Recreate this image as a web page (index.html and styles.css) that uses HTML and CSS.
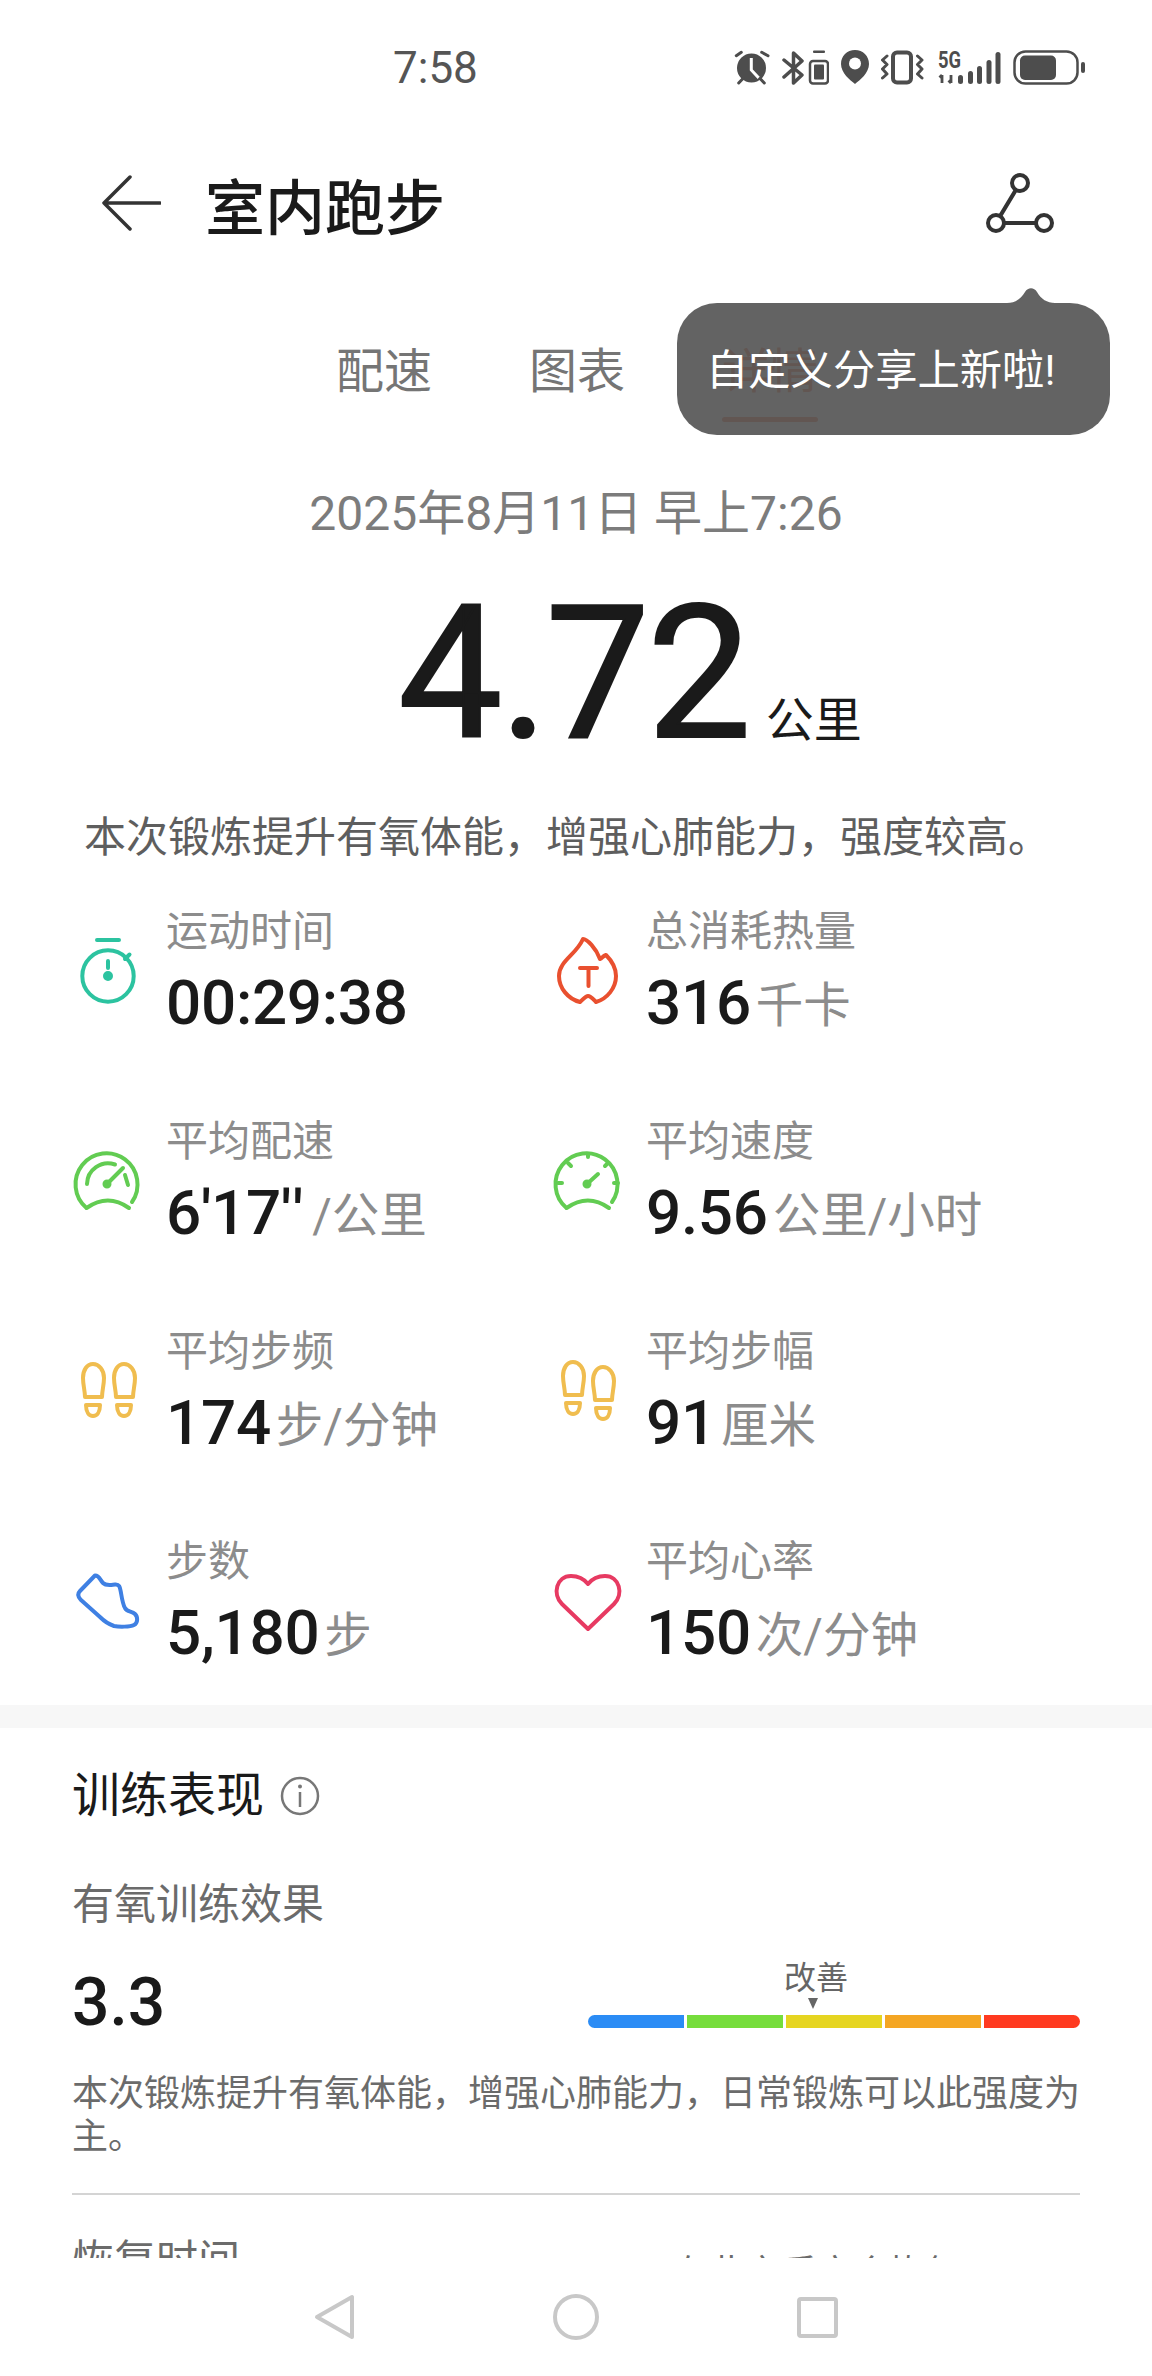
FILE: index.html
```html
<!DOCTYPE html>
<html lang="zh-CN">

<head>
  <meta charset="UTF-8" />
  <meta name="viewport" content="width=device-width, initial-scale=1.0" />
  <title>室内跑步</title>
  <link rel="stylesheet" href="styles.css">
</head>

<body>
  <div class="page">
    <main class="content">
      <div class="statusbar">
        <span class="clock">7:58</span>
        <div class="status-icons">
          <svg width="36" height="36" viewBox="0 0 36 36">
            <circle cx="17.5" cy="18" r="14.5" fill="#4d4d4d" />
            <path d="M17.3 8v12l7.5 8" fill="none" stroke="#fff" stroke-width="3" />
            <path d="M2.3 5.7 7.3 2.3M27.7 2.3l6.3 3.4M4.7 33 9 28.5M26 28.5l4.300 4.500" fill="none" stroke="#4d4d4d" stroke-width="3" stroke-linecap="round" />
          </svg>
          <svg width="47" height="36" viewBox="0 0 47 36">
            <path d="M2 10 20 25l-8.500 8V3L20 11 2 27" fill="none" stroke="#4d4d4d" stroke-width="3.500" stroke-linejoin="round" stroke-linecap="round" />
            <rect x="28" y="11" width="18" height="22.500" rx="3" fill="none" stroke="#4d4d4d" stroke-width="2.500" />
            <rect x="32" y="14.500" width="10" height="15" rx="1" fill="#4d4d4d" />
            <rect x="31" y="0.500" width="12" height="2.500" rx="1" fill="#4d4d4d" />
          </svg>
          <svg width="28" height="36" viewBox="0 0 28 36">
            <path d="M14 0C6 0 0 6 0 14c0 9 9 16 14 20 5-4 14-11 14-20C28 6 22 0 14 0Z" fill="#4d4d4d" />
            <circle cx="14" cy="13.500" r="6" fill="#fff" />
          </svg>
          <svg width="45" height="36" viewBox="0 0 45 36">
            <rect x="12" y="2.500" width="18" height="30" rx="4" fill="none" stroke="#4d4d4d" stroke-width="4" />
            <path d="M6 6 1.500 10 6 14.500 1.500 19 6 24l-4.500 4M36.500 6l4.500 4-4.500 4.500L41 19l-4.500 5 4.500 4" fill="none" stroke="#4d4d4d" stroke-width="3" stroke-linejoin="round" stroke-linecap="round" />
          </svg>
          <svg width="63" height="36" viewBox="0 0 63 36">
            <text class="net-label" x="0" y="18" textLength="23" lengthAdjust="spacingAndGlyphs">5G</text>
            <path d="M4 33v-8M1.500 27.500 4 25M13 25v8M10.500 30.500 13 33" fill="none" stroke="#4d4d4d" stroke-width="2.800" />
            <rect x="20" y="25" width="5" height="9" rx="2.500" fill="#4d4d4d" />
            <rect x="30" y="21" width="5" height="13" rx="2.500" fill="#4d4d4d" />
            <rect x="39" y="16" width="5" height="18" rx="2.500" fill="#4d4d4d" />
            <rect x="48.500" y="10" width="5" height="24" rx="2.500" fill="#4d4d4d" />
            <rect x="57.500" y="2" width="5" height="32" rx="2.500" fill="#4d4d4d" />
          </svg>
          <svg width="72" height="36" viewBox="0 0 72 36">
            <rect x="1.500" y="1.500" width="63" height="32" rx="11" fill="none" stroke="#4d4d4d" stroke-width="2.500" />
            <rect x="7" y="5.500" width="36" height="24.500" rx="5" fill="#4d4d4d" />
            <rect x="68" y="12" width="4" height="11" rx="2" fill="#4d4d4d" />
          </svg>
        </div>
      </div>

      <header class="app-header">
        <div class="header-left">
          <svg width="60" height="56" viewBox="0 0 60 56">
            <path d="M29 2 3 28l26 26M3 28h56" fill="none" stroke="#333" stroke-width="3.500" stroke-linecap="round" stroke-linejoin="round" />
          </svg>
          <h1>室内跑步</h1>
        </div>
        <svg width="70" height="66" viewBox="0 0 70 66">
          <g fill="none" stroke="#333" stroke-width="4">
            <circle cx="35" cy="13" r="8" />
            <circle cx="11" cy="53" r="8" />
            <circle cx="59" cy="53" r="8" />
            <path d="M30.900 19.900 15.100 46.100M19 53h32" />
          </g>
        </svg>
      </header>

      <nav class="tabs">
        <div class="tab">配速</div>
        <div class="tab">图表</div>
        <div class="tab tab-active">详情<div class="tab-line"></div></div>
      </nav>

      <div class="date">2025年8月11日 早上7:26</div>

      <div class="distance">
        <span class="distance-value">4.72</span>
        <span class="distance-unit">公里</span>
      </div>

      <p class="summary">本次锻炼提升有氧体能，增强心肺能力，强度较高。</p>

      <section class="stats">
        <div class="stat">
          <svg width="72" height="72" viewBox="0 0 72 72" fill="none" stroke="#2cc3a0" stroke-width="4" stroke-linecap="round">
            <path d="M25 7h22M53 26l4.500-4.500M36 28v7" />
            <circle cx="36" cy="43" r="25.700" />
            <circle cx="36" cy="43" r="3" fill="#2cc3a0" />
          </svg>
          <div>
            <div class="stat-label">运动时间</div>
            <div class="stat-value">00:29:38</div>
          </div>
        </div>
        <div class="stat">
          <svg width="72" height="72" viewBox="0 0 72 72" fill="none" stroke="#e9502f" stroke-width="4" stroke-linecap="round" stroke-linejoin="round">
            <path d="M31 6c4 0 13 9 17 20 2-1 3-3 6-4 6 6 10 13 10 21 0 12-9 23-20 26-3-3-5-6-8-6s-5 4-8 6C16 66 7 55 7 43 7 28 24 22 31 6Z" />
            <path d="M28 35h17M36.500 35v18" />
          </svg>
          <div>
            <div class="stat-label">总消耗热量</div>
            <div class="stat-value">316<span class="stat-unit">千卡</span></div>
          </div>
        </div>

        <div class="stat">
          <svg width="72" height="72" viewBox="0 0 72 72" fill="none" stroke="#62cc52" stroke-width="4" stroke-linecap="round">
            <path d="M14.500 65A31 31 0 1 1 60 59M14.500 65Q36 50 57 65" />
            <path d="M15 41A21 21 0 0 1 43 21.500M53 32l3 10M35 41l16-16" />
            <circle cx="35" cy="41" r="2.500" fill="#62cc52" />
          </svg>
          <div>
            <div class="stat-label">平均配速</div>
            <div class="stat-value">6'17<span class="prime">''</span><span class="stat-unit">/公里</span></div>
          </div>
        </div>
        <div class="stat">
          <svg width="72" height="72" viewBox="0 0 72 72" fill="none" stroke="#62cc52" stroke-width="4" stroke-linecap="round">
            <path d="M14.500 65A31 31 0 1 1 60 59M14.500 65Q36 50 57 65" />
            <path d="M36 11v3M16 20l3 3M56 20l-3 3M6 40h4M62 40h4M35 41l11-10" />
            <circle cx="35" cy="41" r="2.500" fill="#62cc52" />
          </svg>
          <div>
            <div class="stat-label">平均速度</div>
            <div class="stat-value">9.56<span class="stat-unit">公里/小时</span></div>
          </div>
        </div>

        <div class="stat">
          <svg width="72" height="72" viewBox="0 0 72 72" fill="none" stroke="#f0bd4f" stroke-width="4" stroke-linejoin="round">
            <path d="M21 11c-6 0-10 6-10 14 0 7 2 13 2 19h17c0-6 2-12 2-19 0-8-5-14-11-14Z" />
            <path d="M14 52h14c0 7-3 11-7 11s-7-4-7-11Z" />
            <path d="M52 11c-6 0-10 6-10 14 0 7 2 13 2 19h17c0-6 2-12 2-19 0-8-5-14-11-14Z" />
            <path d="M45 52h14c0 7-3 11-7 11s-7-4-7-11Z" />
          </svg>
          <div>
            <div class="stat-label">平均步频</div>
            <div class="stat-value">174<span class="stat-unit">步/分钟</span></div>
          </div>
        </div>
        <div class="stat">
          <svg width="72" height="72" viewBox="0 0 72 72" fill="none" stroke="#f0bd4f" stroke-width="4" stroke-linejoin="round">
            <path d="M21 9c-6 0-10 6-10 14 0 7 2 13 2 19h17c0-6 2-12 2-19 0-8-5-14-11-14Z" />
            <path d="M14 50h14c0 7-3 11-7 11s-7-4-7-11Z" />
            <path d="M51 14c-6 0-10 6-10 14 0 7 2 13 2 19h17c0-6 2-12 2-19 0-8-5-14-11-14Z" />
            <path d="M44 55h14c0 7-3 11-7 11s-7-4-7-11Z" />
          </svg>
          <div>
            <div class="stat-label">平均步幅</div>
            <div class="stat-value">91<span class="stat-unit">厘米</span></div>
          </div>
        </div>

        <div class="stat">
          <svg width="72" height="72" viewBox="0 0 72 72" fill="none" stroke="#3f80e3" stroke-width="4" stroke-linejoin="round">
            <path d="M23 12.500c4-.5 5 4.500 8 7.500 3 3 7 2 12 1.500 5-.5 5 3.500 6 8.500 1 6 2 12 4 15 2 4 7 3 10 6 3 3 3 9-1 11-4 2-15 2-20 1-6-2-10-5-14-9L9 37c-3-3-4-6-1-9Z" />
          </svg>
          <div>
            <div class="stat-label">步数</div>
            <div class="stat-value">5,180<span class="stat-unit">步</span></div>
          </div>
        </div>
        <div class="stat">
          <svg width="72" height="72" viewBox="0 0 72 72" fill="none" stroke="#e73a62" stroke-width="4" stroke-linejoin="round">
            <path d="M36 66 10 41C0 31 4.500 13 19 13c7 0 13 3 17 8 4-5 10-8 17-8 14.500 0 19 18 9 28Z" />
          </svg>
          <div>
            <div class="stat-label">平均心率</div>
            <div class="stat-value">150<span class="stat-unit">次/分钟</span></div>
          </div>
        </div>
      </section>

      <div class="band"></div>

      <section class="training">
        <h2>训练表现
          <svg class="info-icon" width="40" height="40" viewBox="0 0 40 40">
            <circle cx="20" cy="20" r="18" fill="none" stroke="#777" stroke-width="2.500" />
            <circle cx="20" cy="10.500" r="2" fill="#777" />
            <path d="M20 16v15" stroke="#777" stroke-width="2.500" />
          </svg>
        </h2>
        <div class="training-sub">有氧训练效果</div>
        <div class="effect">
          <div class="effect-value">3.3</div>
          <div class="scale">
            <div class="scale-label">改善</div>
            <div class="scale-arrow"></div>
            <div class="scale-bar">
              <span class="seg seg-blue"></span>
              <span class="seg seg-green"></span>
              <span class="seg seg-yellow"></span>
              <span class="seg seg-orange"></span>
              <span class="seg seg-red"></span>
            </div>
          </div>
        </div>
        <p class="training-desc">本次锻炼提升有氧体能，增强心肺能力，日常锻炼可以此强度为主。</p>
        <div class="divider"></div>
        <div class="recovery">
          <div class="recovery-label">恢复时间</div>
          <div class="recovery-note">在此之后方会恢复</div>
        </div>
      </section>
    </main>

    <footer class="navbar">
      <svg width="41" height="46" viewBox="0 0 41 46">
        <path d="M38 3v40L3 23Z" fill="none" stroke="#c8c8c8" stroke-width="4" stroke-linejoin="round" />
      </svg>
      <svg width="46" height="46" viewBox="0 0 46 46">
        <circle cx="23" cy="23" r="21" fill="none" stroke="#c8c8c8" stroke-width="4" />
      </svg>
      <svg width="41" height="41" viewBox="0 0 41 41">
        <rect x="2" y="2" width="37" height="37" rx="2" fill="none" stroke="#c8c8c8" stroke-width="4" />
      </svg>
    </footer>

    <div class="tooltip">
      <svg class="tooltip-tip" width="48" height="15" viewBox="0 0 48 15">
        <path d="M0 15c8 0 14-4 18-11 3-5 9-5 12 0 4 7 10 11 18 11Z" />
      </svg>
      自定义分享上新啦!
    </div>
  </div>
</body>

</html>
```

FILE: styles.css
```css
/* Global Styles */
* {
  box-sizing: border-box;
  margin: 0;
  padding: 0;
}

body {
  background: #ffffff;
  font-family: Roboto, "Noto Sans CJK SC", sans-serif;
  color: #1a1a1a;
}

.page {
  position: relative;
  display: flex;
  flex-direction: column;
  width: 1152px;
  height: 2376px;
  overflow: hidden;
}

.content {
  height: 2258px;
  overflow: hidden;
}

/* Status bar */
.statusbar {
  display: flex;
  align-items: center;
  justify-content: space-between;
  height: 136px;
  padding: 0 67px 0 393px;
}

.clock {
  font-size: 44px;
  color: #555555;
}

.status-icons {
  display: flex;
  align-items: center;
  gap: 12px;
}

.net-label {
  font-size: 23px;
  font-weight: 700;
  fill: #4d4d4d;
}

/* Header */
.app-header {
  display: flex;
  align-items: center;
  justify-content: space-between;
  height: 134px;
  padding: 0 97px 0 101px;
}

.header-left {
  display: flex;
  align-items: center;
  gap: 44px;
}

h1 {
  font-size: 60px;
  font-weight: 500;
}

/* Tabs */
.tabs {
  display: flex;
  gap: 97px;
  height: 80px;
  margin-top: 72px;
  padding-left: 336px;
}

.tab {
  font-size: 48px;
  line-height: 60px;
  color: #757575;
}

.tab-active {
  color: #eb5a28;
}

.tab-line {
  height: 5px;
  margin-top: 15px;
  border-radius: 3px;
  background: #eb5a28;
}

/* Tooltip */
.tooltip {
  position: absolute;
  top: 303px;
  left: 677px;
  display: flex;
  align-items: center;
  width: 433px;
  height: 132px;
  padding: 0 0 6px 29px;
  border-radius: 40px;
  background: rgba(86, 86, 86, 0.92);
  font-size: 42.300px;
  color: #ffffff;
}

.tooltip-tip {
  position: absolute;
  top: -15px;
  left: 330px;
  fill: rgba(86, 86, 86, 0.92);
}

/* Distance */
.date {
  margin-top: 62px;
  font-size: 48px;
  line-height: 60px;
  text-align: center;
  color: #7c7c7c;
}

.distance {
  display: flex;
  align-items: baseline;
  gap: 17px;
  margin-top: 36px;
  padding-left: 398px;
}

.distance-value {
  font-size: 186px;
  font-weight: 400;
  line-height: 186px;
  letter-spacing: -3px;
  -webkit-text-stroke: 2px #1a1a1a;
}

.distance-unit {
  font-size: 48px;
}

.summary {
  margin-top: 42px;
  padding-left: 84px;
  font-size: 42px;
  line-height: 60px;
  color: #5e5e5e;
}

/* Stats */
.stats {
  display: grid;
  grid-template-columns: 480px 480px;
  grid-auto-rows: 172px;
  row-gap: 38px;
  margin-top: 35px;
  padding-left: 72px;
}

.stat {
  display: flex;
  gap: 22px;
}

.stat svg {
  flex: none;
  margin-top: 30px;
}

.stat-label {
  padding-top: 1px;
  font-size: 42px;
  line-height: 56px;
  color: #8c8c8c;
}

.stat-value {
  margin-top: 5px;
  font-size: 62px;
  font-weight: 500;
  line-height: 76px;
  letter-spacing: -0.3px;
  white-space: nowrap;
}

.prime {
  letter-spacing: 4px;
}

.stat-unit {
  margin-left: 5px;
  font-size: 47.500px;
  font-weight: 400;
  letter-spacing: 0;
  color: #8c8c8c;
  vertical-align: 2px;
}

.band {
  height: 23px;
  background: #f7f7f7;
}

/* Training */
.training {
  padding: 38px 72px 0;
}

h2 {
  display: flex;
  align-items: center;
  gap: 16px;
  font-size: 48px;
  font-weight: 400;
  line-height: 60px;
}

.training-sub {
  margin-top: 51px;
  font-size: 42px;
  line-height: 56px;
  color: #6b6b6b;
}

.effect {
  display: flex;
  align-items: flex-start;
  justify-content: space-between;
  height: 82px;
  margin-top: 27px;
}

.effect-value {
  padding-top: 3px;
  font-size: 66px;
  font-weight: 500;
  line-height: 80px;
}

.scale {
  width: 492px;
}

.scale-label {
  padding-left: 196px;
  font-size: 32px;
  line-height: 36px;
  color: #666666;
}

.scale-arrow {
  width: 0;
  height: 0;
  margin: 2px 0 0 220px;
  border-top: 11px solid #666666;
  border-right: 5px solid transparent;
  border-left: 5px solid transparent;
}

.scale-bar {
  display: flex;
  gap: 3px;
  height: 13px;
  margin-top: 6px;
  overflow: hidden;
  border-radius: 7px;
}

.seg {
  flex: 1;
}

.seg-blue {
  background: #2b8cf5;
}

.seg-green {
  background: #76dd3c;
}

.seg-yellow {
  background: #e6d521;
}

.seg-orange {
  background: #f4a623;
}

.seg-red {
  background: #ff3a20;
}

.training-desc {
  margin-top: 31px;
  font-size: 36px;
  line-height: 43px;
  color: #6b6b6b;
}

.divider {
  height: 2px;
  margin-top: 34px;
  background: #d4d4d4;
}

.recovery {
  display: flex;
  margin-top: 38px;
}

.recovery-label {
  width: 601px;
  font-size: 42px;
  line-height: 56px;
  color: #6b6b6b;
}

.recovery-note {
  margin-top: 20px;
  font-size: 36px;
  line-height: 43px;
  color: #6b6b6b;
}

/* Bottom navigation */
.navbar {
  display: flex;
  flex: 1;
  align-items: center;
  justify-content: center;
  gap: 198px;
}
```
